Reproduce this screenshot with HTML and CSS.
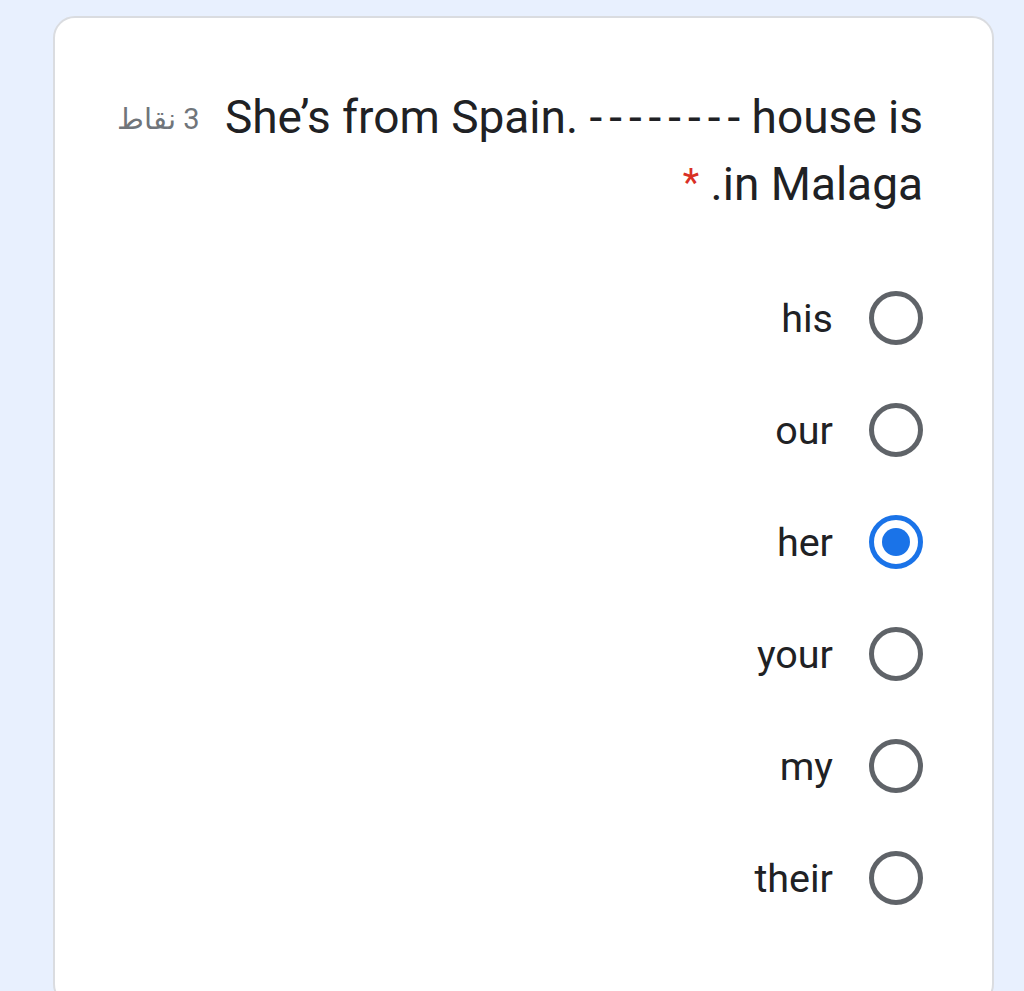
FILE: index.html
```html
<!DOCTYPE html>
<html lang="ar" dir="rtl">
<head>
<meta charset="utf-8">
<link rel="stylesheet" href="styles.css">
</head>
<body>
<div class="card">
  <div class="header">
    <div class="title">She’s from Spain. <span class="blank">-------</span>- house is in Malaga. <span class="req">*</span></div>
    <div class="points">3 نقاط</div>
  </div>
  <div class="options">
    <div class="option"><span class="radio"></span><span class="label">his</span></div>
    <div class="option"><span class="radio"></span><span class="label">our</span></div>
    <div class="option"><span class="radio checked"></span><span class="label">her</span></div>
    <div class="option"><span class="radio"></span><span class="label">your</span></div>
    <div class="option"><span class="radio"></span><span class="label">my</span></div>
    <div class="option"><span class="radio"></span><span class="label">their</span></div>
  </div>
</div>
</body>
</html>
```

FILE: styles.css
```css
html, body {
  margin: 0;
  padding: 0;
}
body {
  background: #e8f0fe;
  font-family: Roboto, "Noto Sans", sans-serif;
  color: #202124;
  height: 991px;
  overflow: hidden;
}
.card {
  box-sizing: border-box;
  margin: 16px 30px 0 53px;
  height: 990px;
  background: #fff;
  border: 2px solid #dadce0;
  border-radius: 22px;
  padding: 66px 69px 0 62px;
}
.header {
  display: flex;
  align-items: flex-start;
  gap: 16px;
}
.title {
  flex: 1;
  font-size: 46px;
  line-height: 66px;
}
.blank {
  letter-spacing: 7px;
}
.req {
  color: #d93025;
  font-size: 38px;
  vertical-align: 4px;
}
.points {
  flex: none;
  font-size: 29px;
  color: #70757a;
  line-height: 66px;
  padding-top: 2px;
}
.options {
  margin-top: 45px;
  display: flex;
  flex-direction: column;
}
.option {
  display: flex;
  align-items: center;
  height: 112px;
  gap: 36px;
}
.label {
  font-size: 39.5px;
}
.radio {
  box-sizing: border-box;
  width: 54px;
  height: 54px;
  border: 5px solid #5f6368;
  border-radius: 50%;
  display: flex;
  align-items: center;
  justify-content: center;
}
.radio.checked {
  border-color: #1a73e8;
}
.radio.checked::after {
  content: "";
  width: 28px;
  height: 28px;
  border-radius: 50%;
  background: #1a73e8;
}
```
